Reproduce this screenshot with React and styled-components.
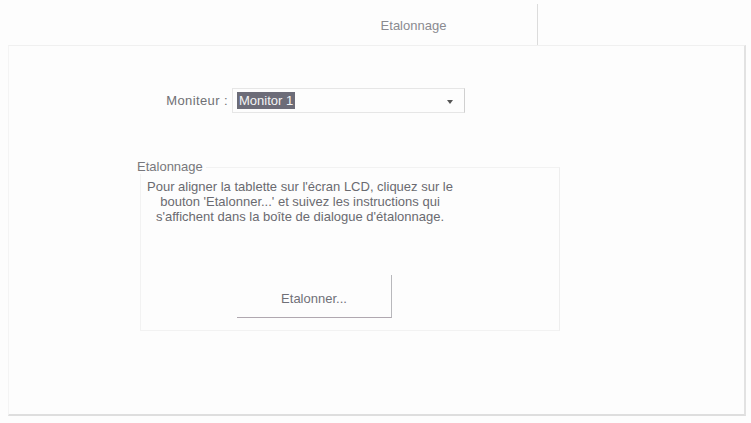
import React from 'react';
import styled, { createGlobalStyle } from 'styled-components';

const GlobalStyle = createGlobalStyle`
  html, body {
    margin: 0;
    padding: 0;
    background: #fdfdfd;
  }
  body {
    font-family: 'Liberation Sans', Arial, sans-serif;
  }
`;

const Window = styled.div`
  width: 751px;
  height: 423px;
  display: flex;
  flex-direction: column;
  background: #fdfdfd;
  color: #6e6e72;
  font-size: 13px;
`;

const TabStrip = styled.div`
  display: flex;
  height: 45px;
  padding-left: 290px;
  padding-top: 4px;
  box-sizing: border-box;
`;

const Tab = styled.div`
  width: 248px;
  display: flex;
  justify-content: center;
  padding-top: 14px;
  box-sizing: border-box;
  border-right: 1px solid #dcdcdc;
  color: #8a8a90;
`;

const Panel = styled.div`
  flex: 1;
  margin: 0 5px 7px 8px;
  border-top: 1px solid #f0f0f0;
  border-right: 2px solid #e2e2e2;
  border-bottom: 2px solid #dedede;
  border-left: 1px solid #f4f4f4;
  display: flex;
  flex-direction: column;
  padding: 42px 0 0 131px;
`;

const MonitorRow = styled.div`
  display: flex;
  align-items: center;
  gap: 4px;
  padding-left: 14px;
`;

const Label = styled.span`
  color: #707074;
  width: 74px;
  text-align: right;
  letter-spacing: 0.4px;
`;

const Select = styled.div`
  width: 233px;
  height: 25px;
  box-sizing: border-box;
  border: 1px solid #e6e6e6;
  border-right-color: #d0d0d0;
  display: flex;
  align-items: center;
  padding: 0 6px 0 4px;
  justify-content: space-between;
`;

const Selected = styled.span`
  background: #6c6c78;
  color: #f4f4f4;
  padding: 1px 2px;
`;

const Arrow = styled.span`
  width: 0;
  height: 0;
  border-left: 3px solid transparent;
  border-right: 3px solid transparent;
  border-top: 4px solid #555;
  margin-right: 5px;
  margin-top: 2px;
`;

const Group = styled.div`
  margin-top: 54px;
  width: 420px;
  height: 164px;
  box-sizing: border-box;
  position: relative;
  border: 1px solid #f2f2f2;
  border-right-color: #eeeeee;
  display: flex;
  flex-direction: column;
  align-items: flex-start;
  padding-left: 6px;
`;

const Legend = styled.span`
  position: absolute;
  top: -9px;
  left: -4px;
  padding-right: 3px;
  color: #78787c;
  background: #fdfdfd;
`;

const Text = styled.p`
  margin: 11px 0 0 0;
  width: 306px;
  text-align: center;
  line-height: 15px;
  color: #6a6a70;
`;

const Button = styled.div`
  margin: 51px 0 0 90px;
  width: 155px;
  height: 43px;
  box-sizing: border-box;
  border-right: 1px solid #b8b8bc;
  border-bottom: 1px solid #b0a8b0;
  display: flex;
  align-items: center;
  justify-content: center;
  color: #707078;
  padding-top: 4px;
`;

const App = () => {
  return (
    <Window>
      <GlobalStyle />
      <TabStrip>
        <Tab>Etalonnage</Tab>
      </TabStrip>
      <Panel>
        <MonitorRow>
          <Label>Moniteur :</Label>
          <Select>
            <Selected>Monitor 1</Selected>
            <Arrow />
          </Select>
        </MonitorRow>
        <Group>
          <Legend>Etalonnage</Legend>
          <Text>
            Pour aligner la tablette sur l'écran LCD, cliquez sur le<br />
            bouton 'Etalonner...' et suivez les instructions qui<br />
            s'affichent dans la boîte de dialogue d'étalonnage.
          </Text>
          <Button>Etalonner...</Button>
        </Group>
      </Panel>
    </Window>
  );
};

export default App;
